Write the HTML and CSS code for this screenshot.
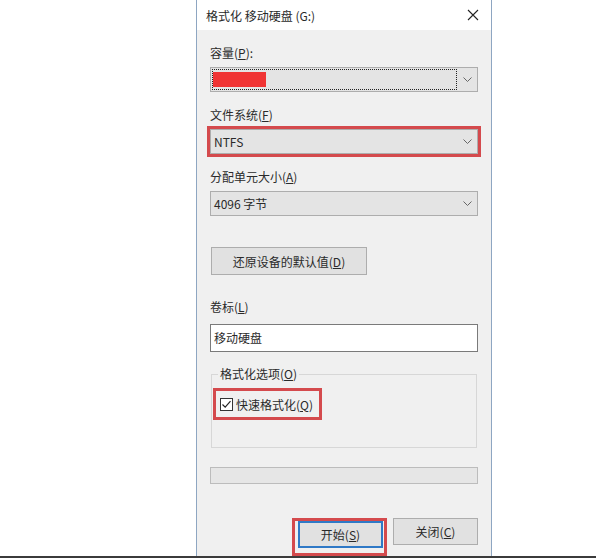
FILE: index.html
```html
<!DOCTYPE html>
<html lang="zh-CN">
<head>
    <meta charset="UTF-8">
    <meta name="viewport" content="width=device-width, initial-scale=1.0">
    <title>格式化 移动硬盘 (G:)</title>
    <link rel="stylesheet" href="styles.css">
</head>
<body>
    <div class="dialog">
        <div class="titlebar">
            <span class="title">格式化 移动硬盘 (G:)</span>
            <svg class="close" width="12" height="12" viewBox="0 0 12 12">
                <path d="M1 1L11 11M11 1L1 11" stroke="#222" stroke-width="1.1" fill="none"/>
            </svg>
        </div>
        <div class="content">
            <div class="label">容量(<u>P</u>):</div>
            <div class="combo">
                <div class="focusrect"><span class="redact"></span></div>
                <svg class="arrow" width="9" height="5" viewBox="0 0 9 5"><path d="M0.5 0.5L4.5 4.5L8.5 0.5" stroke="#666" fill="none"/></svg>
            </div>

            <div class="label">文件系统(<u>F</u>)</div>
            <div class="combo mark">
                <span class="val">NTFS</span>
                <svg class="arrow" width="9" height="5" viewBox="0 0 9 5"><path d="M0.5 0.5L4.5 4.5L8.5 0.5" stroke="#666" fill="none"/></svg>
            </div>

            <div class="label">分配单元大小(<u>A</u>)</div>
            <div class="combo">
                <span class="val">4096 字节</span>
                <svg class="arrow" width="9" height="5" viewBox="0 0 9 5"><path d="M0.5 0.5L4.5 4.5L8.5 0.5" stroke="#666" fill="none"/></svg>
            </div>

            <div class="btn restore">还原设备的默认值(<u>D</u>)</div>

            <div class="label vol">卷标(<u>L</u>)</div>
            <div class="textbox">移动硬盘</div>

            <fieldset class="group">
                <legend>格式化选项(<u>O</u>)</legend>
                <div class="checkrow">
                    <svg class="checkbox" width="13" height="13" viewBox="0 0 13 13">
                        <rect x="0.5" y="0.5" width="12" height="12" fill="#fff" stroke="#333"/>
                        <path d="M2.5 6.5L5.2 9.2L10.5 3.2" stroke="#222" stroke-width="1.2" fill="none"/>
                    </svg>
                    <span>快速格式化(<u>Q</u>)</span>
                </div>
            </fieldset>

            <div class="progress"></div>

            <div class="buttons">
                <div class="startmark">
                    <div class="btn default">开始(<u>S</u>)</div>
                </div>
                <div class="btn">关闭(<u>C</u>)</div>
            </div>
        </div>
    </div>
    <div class="taskbar"></div>
</body>
</html>
```

FILE: styles.css
```css
body{
    margin: 0;
    background: #fff;
    font-family: "Noto Sans CJK SC", "Liberation Sans", sans-serif;
    font-size: 12px;
    color: #2a2a2a;
}

.dialog{
    margin-left: 196px;
    width: 294px;
    height: 556px;
    border-left: 1px solid #8ea6c2;
    border-right: 1px solid #8ea6c2;
    background: #f0f0f0;
    overflow: hidden;
}

.titlebar{
    height: 30px;
    background: #fff;
    display: flex;
    align-items: center;
    justify-content: space-between;
    padding: 0 12px 0 9px;
}
.close{ display: block; }

.content{
    padding: 15px 13px 0 13px;
}

.label{
    height: 16px;
    line-height: 16px;
    margin-bottom: 6px;
}
.label.vol{ margin-bottom: 9px; }

.combo{
    height: 25px;
    box-sizing: border-box;
    background: #e4e4e4;
    border: 1px solid #adadad;
    display: flex;
    align-items: center;
    margin-bottom: 15px;
}
.combo .val{
    flex: 1;
    padding-left: 3px;
}
.combo .arrow{
    margin: 0 5px 0 6px;
}
.combo.mark{
    outline: 3px solid #d44a4d;
    outline-offset: 0;
}

.focusrect{
    flex: 1;
    height: 19px;
    margin-left: 1px;
    border: 1px dotted #222;
    display: flex;
    align-items: center;
}
.redact{
    width: 53px;
    height: 15px;
    background: #f03434;
}

.btn{
    width: 85px;
    height: 27px;
    box-sizing: border-box;
    background: #e1e1e1;
    border: 1px solid #adadad;
    display: flex;
    align-items: center;
    justify-content: center;
}
.btn.restore{
    width: 156px;
    height: 28px;
    margin: 31px 0 0 1px;
}
.btn.default{
    border: 2px solid #2f79c6;
}

.vol{ margin-top: 24px; }

.textbox{
    height: 28px;
    box-sizing: border-box;
    background: #fff;
    border: 1px solid #7a7a7a;
    padding-left: 3px;
    line-height: 26px;
}

.group{
    margin: 14px 1px 0 1px;
    padding: 6px 0 27px 1px;
    border: 1px solid #d7d7d7;
}
.group legend{
    margin-left: 5px;
    padding: 0 2px;
    line-height: 16px;
}

.checkrow{
    display: inline-flex;
    align-items: center;
    gap: 3px;
    height: 26px;
    padding: 0 6px 0 4px;
    border: 3px solid #d44a4d;
}
.checkbox{ display: block; }

.progress{
    height: 17px;
    box-sizing: border-box;
    margin-top: 19px;
    background: #e6e6e6;
    border: 1px solid #bcbcbc;
}

.buttons{
    display: flex;
    justify-content: flex-end;
    align-items: flex-start;
    margin-top: 34px;
    gap: 6px;
}
.startmark{
    border: 3px solid #d44a4d;
    padding: 0 1px 5px 3px;
}

.taskbar{
    height: 2px;
    background: #3b3b3b;
}
```
